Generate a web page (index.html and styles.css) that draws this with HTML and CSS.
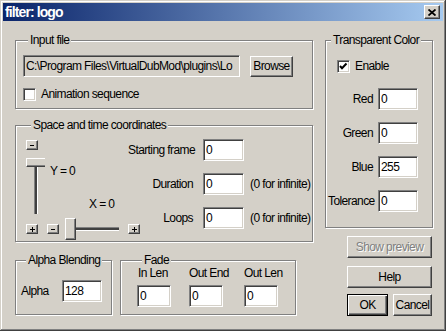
FILE: index.html
```html
<!DOCTYPE html>
<html lang="en">
<head>
    <meta charset="UTF-8">
    <title>filter: logo</title>
    <link rel="stylesheet" href="styles.css">
</head>
<body>
    <div class="window">
        <div class="titlebar">
            <span class="title">filter: logo</span>
            <button class="close-btn" type="button">
                <svg width="8" height="7" viewBox="0 0 8 7"><path d="M0.5 0.5 L7.5 6.5 M7.5 0.5 L0.5 6.5" stroke="#000" stroke-width="1.8" fill="none"/></svg>
            </button>
        </div>

        <div class="client">
            <div class="left-col">
                <div class="group input-group">
                    <div class="group-title">Input file</div>
                    <div class="file-row">
                        <input class="field readonly file-field" type="text" value="C:\Program Files\VirtualDubMod\plugins\Lo" readonly>
                        <button class="btn browse-btn" type="button">Browse</button>
                    </div>
                    <div class="check-row">
                        <span class="checkbox"></span>
                        <span class="check-label">Animation sequence</span>
                    </div>
                </div>

                <div class="group space-group">
                    <div class="group-title">Space and time coordinates</div>
                    <div class="space-body">
                        <div class="slider-area">
                            <div class="mini-btn"><svg width="5" height="5" viewBox="0 0 5 5"><path d="M0 2.5 H4" stroke="#000" stroke-width="1"/></svg></div>
                            <div class="slider-row">
                                <div class="vslider">
                                    <div class="vthumb"></div>
                                    <div class="vchannel"></div>
                                </div>
                                <div class="axis-labels">
                                    <div class="axis-y">Y = 0</div>
                                    <div class="axis-x">X = 0</div>
                                </div>
                            </div>
                            <div class="hslider-row">
                                <div class="mini-btn"><svg width="5" height="5" viewBox="0 0 5 5"><path d="M0 2.5 H5 M2.5 0 V5" stroke="#000" stroke-width="1"/></svg></div>
                                <div class="mini-btn minus-x"><svg width="5" height="5" viewBox="0 0 5 5"><path d="M0 2.5 H4" stroke="#000" stroke-width="1"/></svg></div>
                                <div class="hslider">
                                    <div class="hthumb"></div>
                                    <div class="hchannel"></div>
                                </div>
                                <div class="mini-btn plus-x"><svg width="5" height="5" viewBox="0 0 5 5"><path d="M0 2.5 H5 M2.5 0 V5" stroke="#000" stroke-width="1"/></svg></div>
                            </div>
                        </div>
                        <div class="form-grid">
                            <span class="form-label">Starting frame</span>
                            <input class="field small-field" type="text" value="0">
                            <span></span>
                            <span class="form-label">Duration</span>
                            <input class="field small-field" type="text" value="0">
                            <span class="note">(0 for infinite)</span>
                            <span class="form-label">Loops</span>
                            <input class="field small-field" type="text" value="0">
                            <span class="note">(0 for infinite)</span>
                        </div>
                    </div>
                </div>

                <div class="bottom-row">
                    <div class="group alpha-group">
                        <div class="group-title">Alpha Blending</div>
                        <div class="alpha-row">
                            <span class="alpha-label">Alpha</span>
                            <input class="field alpha-field" type="text" value="128">
                        </div>
                    </div>
                    <div class="group fade-group">
                        <div class="group-title">Fade</div>
                        <div class="fade-grid">
                            <span>In Len</span>
                            <span>Out End</span>
                            <span>Out Len</span>
                            <input class="field fade-field" type="text" value="0">
                            <input class="field fade-field" type="text" value="0">
                            <input class="field fade-field" type="text" value="0">
                        </div>
                    </div>
                </div>
            </div>

            <div class="right-col">
                <div class="group color-group">
                    <div class="group-title">Transparent Color</div>
                    <div class="check-row enable-row">
                        <span class="checkbox">
                            <svg width="11" height="11" viewBox="0 0 11 11"><path d="M2 5 L4 7.2 L8.5 2.5" stroke="#000" stroke-width="2" fill="none"/></svg>
                        </span>
                        <span class="check-label">Enable</span>
                    </div>
                    <div class="color-grid">
                        <span class="form-label">Red</span>
                        <input class="field color-field" type="text" value="0">
                        <span class="form-label">Green</span>
                        <input class="field color-field" type="text" value="0">
                        <span class="form-label">Blue</span>
                        <input class="field color-field" type="text" value="255">
                        <span class="form-label">Tolerance</span>
                        <input class="field color-field" type="text" value="0">
                    </div>
                </div>

                <div class="actions">
                    <button class="btn wide-btn" type="button" disabled>Show preview</button>
                    <button class="btn wide-btn help-btn" type="button">Help</button>
                    <div class="ok-row">
                        <button class="btn default-btn ok-btn" type="button">OK</button>
                        <button class="btn cancel-btn" type="button">Cancel</button>
                    </div>
                </div>
            </div>
        </div>
    </div>
</body>
</html>
```

FILE: styles.css
```css
body {
    margin: 0;
    background: #d4d0c8;
    font-family: "Liberation Sans", Arial, sans-serif;
    font-size: 12px;
    letter-spacing: -0.6px;
    color: #000;
}
.window {
    width: 446px;
    height: 331px;
    box-sizing: border-box;
    padding: 3px;
    background: #d4d0c8;
    box-shadow: inset -1px -1px #404040, inset 1px 1px #d4d0c8, inset -2px -2px #808080, inset 2px 2px #fff;
}
.titlebar {
    height: 18px;
    display: flex;
    align-items: center;
    justify-content: space-between;
    padding: 0 3px 0 2px;
    background: linear-gradient(to right, #0a246a, #a6caf0);
}
.title {
    color: #fff;
    font-weight: bold;
    font-size: 14px;
    letter-spacing: -0.9px;
}
.close-btn {
    width: 16px;
    height: 14px;
    padding: 0;
    display: flex;
    align-items: center;
    justify-content: center;
    background: #d4d0c8;
    border: 1px solid;
    border-color: #fff #404040 #404040 #fff;
    box-shadow: inset -1px -1px #808080;
}
.client {
    display: grid;
    grid-template-columns: 298px 108px;
    column-gap: 12px;
    padding: 19px 0 0 12px;
}

/* group boxes */
.group {
    box-sizing: border-box;
    border: 1px solid #808080;
    box-shadow: 1px 1px 0 #fff, inset 1px 1px 0 #fff;
}
.group-title {
    width: fit-content;
    margin: -8px 0 0 5px;
    padding: 0 2px;
    line-height: 14px;
    white-space: nowrap;
    background: #d4d0c8;
}
.input-group {
    height: 69px;
    padding: 0 7px;
}
.file-row {
    display: flex;
    align-items: center;
    margin-top: 8px;
}
.file-field {
    width: 217px;
    height: 23px;
}
.browse-btn {
    width: 43px;
    height: 21px;
    margin-left: 10px;
}
.check-row {
    display: flex;
    align-items: center;
    margin-top: 10px;
    line-height: 14px;
    white-space: nowrap;
}
.check-label {
    margin-left: 5px;
}
.checkbox {
    width: 13px;
    height: 13px;
    box-sizing: border-box;
    display: flex;
    background: #fff;
    border: 1px solid;
    border-color: #808080 #fff #fff #808080;
    box-shadow: inset 1px 1px #404040, inset -1px -1px #d4d0c8;
}

/* space and time */
.space-group {
    height: 117px;
    margin-top: 16px;
    padding-left: 10px;
}
.space-body {
    display: flex;
    margin-top: 7px;
}
.slider-area {
    width: 102px;
    flex-shrink: 0;
    margin-top: 1px;
}
.mini-btn {
    width: 12px;
    height: 10px;
    box-sizing: border-box;
    flex-shrink: 0;
    display: flex;
    align-items: center;
    justify-content: center;
    background: #d4d0c8;
    border: 1px solid;
    border-color: #fff #404040 #404040 #fff;
    box-shadow: inset -1px -1px #808080;
}
.slider-row {
    display: flex;
    height: 56px;
    margin-top: 8px;
}
.vslider {
    width: 19px;
    display: flex;
    flex-direction: column;
    align-items: center;
}
.vthumb {
    width: 19px;
    height: 9px;
    box-sizing: border-box;
    border-top: 1px solid #fff;
    border-left: 1px solid #fff;
    border-bottom: 1px solid #404040;
    box-shadow: inset 0 -1px #808080;
}
.vchannel {
    flex: 1;
    width: 2px;
    background: #404040;
    border-left: 1px solid #808080;
    border-right: 1px solid #fff;
}
.axis-labels {
    margin-left: 5px;
    line-height: 14px;
    white-space: nowrap;
}
.axis-y {
    margin-top: 6px;
}
.axis-x {
    margin: 19px 0 0 39px;
}
.hslider-row {
    display: flex;
    align-items: center;
    height: 22px;
    margin-top: 4px;
}
.minus-x {
    margin-left: 9px;
}
.hslider {
    width: 54px;
    height: 22px;
    flex-shrink: 0;
    margin-left: 6px;
    display: flex;
    align-items: center;
}
.hthumb {
    width: 11px;
    height: 22px;
    box-sizing: border-box;
    flex-shrink: 0;
    border: 1px solid;
    border-color: #fff #404040 #404040 #fff;
    box-shadow: inset -1px -1px #808080;
}
.hchannel {
    flex: 1;
    height: 2px;
    background: #404040;
    border-top: 1px solid #808080;
    border-bottom: 1px solid #fff;
}
.plus-x {
    margin-left: 9px;
}
.form-grid {
    display: grid;
    grid-template-columns: 65px 51px auto;
    grid-auto-rows: 22px;
    row-gap: 12px;
    align-items: center;
}
.form-label {
    text-align: right;
    white-space: nowrap;
}
.form-grid .small-field {
    margin-left: 10px;
}
.small-field {
    width: 41px;
}
.note {
    margin-left: 6px;
    white-space: nowrap;
}

/* bottom groups */
.bottom-row {
    display: flex;
    gap: 8px;
    margin-top: 18px;
}
.alpha-group {
    width: 97px;
    height: 55px;
    padding-left: 5px;
}
.alpha-row {
    display: flex;
    align-items: center;
    margin-top: 13px;
}
.alpha-label {
    width: 41px;
}
.alpha-field {
    width: 40px;
}
.fade-group {
    width: 176px;
    height: 55px;
    padding-left: 16px;
}
.fade-grid {
    display: grid;
    grid-template-columns: 52px 55px 34px;
    line-height: 14px;
    white-space: nowrap;
    margin-top: -1px;
    row-gap: 5px;
}
.fade-grid span:first-child {
    padding-left: 1px;
}
.fade-field {
    width: 34px;
}

/* transparent color */
.color-group {
    height: 188px;
}
.enable-row {
    margin: 12px 0 0 11px;
}
.enable-row .checkbox {
    align-items: center;
    justify-content: center;
}
.color-grid {
    display: grid;
    grid-template-columns: 45px 40px;
    grid-auto-rows: 22px;
    column-gap: 5px;
    row-gap: 12px;
    align-items: center;
    margin: 15px 0 0 2px;
}
.color-field {
    width: 40px;
}

/* inputs and buttons */
.field {
    font: inherit;
    letter-spacing: inherit;
    height: 22px;
    box-sizing: border-box;
    padding: 0 2px;
    margin: 0;
    color: #000;
    background: #fff;
    border: 1px solid;
    border-color: #808080 #fff #fff #808080;
    box-shadow: inset 1px 1px #404040, inset -1px -1px #d4d0c8;
    outline: none;
}
.readonly {
    background: #d4d0c8;
}
.btn {
    font: inherit;
    letter-spacing: inherit;
    padding: 0;
    color: #000;
    background: #d4d0c8;
    border: 1px solid;
    border-color: #fff #404040 #404040 #fff;
    box-shadow: inset -1px -1px #808080;
}
.btn:disabled {
    color: #808080;
    text-shadow: 1px 1px #fff;
}
.actions {
    display: flex;
    flex-direction: column;
    margin-top: 8px;
    padding-left: 22px;
}
.wide-btn {
    width: 85px;
    height: 22px;
}
.help-btn {
    margin-top: 8px;
}
.ok-row {
    display: flex;
    gap: 5px;
    margin-top: 6px;
}
.ok-btn {
    width: 41px;
    height: 22px;
}
.default-btn {
    border-color: #000;
    box-shadow: inset 1px 1px #fff, inset -1px -1px #404040, inset -2px -2px #808080;
}
.cancel-btn {
    width: 39px;
    height: 22px;
}
```
